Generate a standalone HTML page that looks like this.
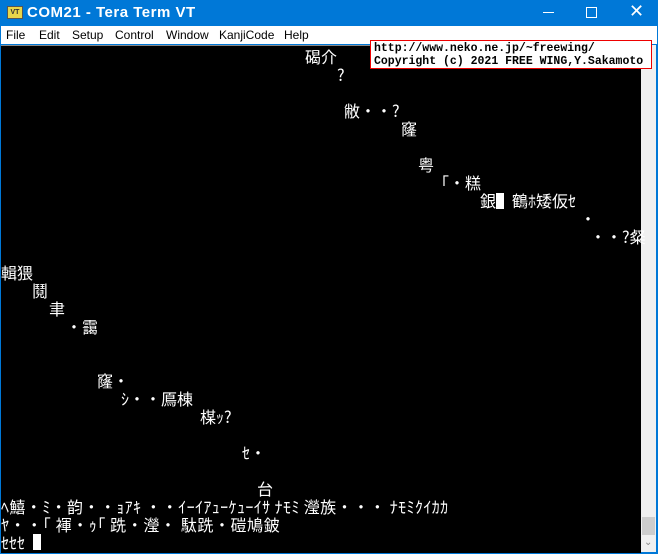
<!DOCTYPE html>
<html><head><meta charset="utf-8"><style>
body{margin:0;width:658px;height:552px;overflow:hidden;background:#0078d7;position:relative;font-family:"Liberation Sans","Noto Sans CJK JP",sans-serif}
.title{position:absolute;left:0;top:0;width:658px;height:26px;background:#0078d7;color:#fff;font-size:15px}
.title .t{position:absolute;left:27px;top:4px;font-weight:bold;letter-spacing:.5px}
.icon{position:absolute;left:7px;top:6px;width:14px;height:11px;background:#e8d64a;border:1px solid #555;font-size:7px;color:#333;line-height:11px;text-align:center;font-weight:bold}
.menu{position:absolute;left:1px;top:26px;width:656px;height:18px;background:#fff;font-size:12px;color:#000}
.menu span{position:absolute;top:2px}
.term{position:absolute;left:1px;top:45px;width:640px;height:507px;background:#000;border-top:1px solid #888}
.sb{position:absolute;left:641px;top:45px;width:15px;height:507px;background:#f0f0f0}
.r{position:absolute;color:#fff;font-size:16px;line-height:18px;white-space:pre;font-family:"Noto Sans CJK JP","WenQuanYi Zen Hei",sans-serif}
.box{position:absolute;left:370px;top:40px;width:282px;height:29px;background:#fff;border:1px solid #e00;font-family:"Liberation Mono",monospace;font-weight:bold;font-size:11.5px;line-height:13px;color:#000;padding-left:3px;padding-top:1px;box-sizing:border-box;white-space:pre}
</style></head><body>
<div class="title"><div class="icon">VT</div><div class="t">COM21 - Tera Term VT</div>
<div style="position:absolute;left:543px;top:12px;width:11px;height:1px;background:#fff"></div>
<div style="position:absolute;left:586px;top:7px;width:9px;height:9px;border:1px solid #fff"></div>
<div style="position:absolute;left:629px;top:1px;font-size:18px;font-weight:normal">✕</div></div>
<div class="menu"><span style="left:5px">File</span><span style="left:38px">Edit</span><span style="left:71px">Setup</span><span style="left:114px">Control</span><span style="left:165px">Window</span><span style="left:218px">KanjiCode</span><span style="left:283px">Help</span></div>
<div class="term"></div>
<div class="sb"><div style="position:absolute;left:1px;top:472px;width:13px;height:18px;background:#cdcdcd"></div><div style="position:absolute;left:3px;top:492px;color:#888;font-size:10px">⌄</div></div>
<div class="r" style="left:305px;top:47px">碣介</div>
<div class="r" style="left:337px;top:65px">?</div>
<div class="r" style="left:344px;top:101px">敝・・?</div>
<div class="r" style="left:401px;top:119px">窿</div>
<div class="r" style="left:418px;top:155px">粤</div>
<div class="r" style="left:433px;top:173px">「・糕</div>
<div class="r" style="left:480px;top:191px">銀▌鶴ﾎ矮仮ｾ</div>
<div class="r" style="left:580px;top:209px">・</div>
<div class="r" style="left:590px;top:227px">・・?粲</div>
<div class="r" style="left:1px;top:263px">輯猥</div>
<div class="r" style="left:32px;top:281px">鬩</div>
<div class="r" style="left:49px;top:299px">聿</div>
<div class="r" style="left:66px;top:317px">・靄</div>
<div class="r" style="left:97px;top:371px">窿・</div>
<div class="r" style="left:121px;top:389px">ｼ・・鳫棟</div>
<div class="r" style="left:200px;top:407px">楳ｯ?</div>
<div class="r" style="left:242px;top:443px">ｾ・</div>
<div class="r" style="left:257px;top:479px">台</div>
<div class="r" style="left:1px;top:497px;letter-spacing:0.4px">ﾍ鱚・ﾐ・韵・・ｮｱｷ ・・ｲｰｲｱｭｰｹｭｰｲｻ ﾅﾓﾐ 瀅族・・・ ﾅﾓﾐｸｲｶｶ</div>
<div class="r" style="left:1px;top:515px;letter-spacing:0.6px">ﾔ・・「 褌・ｩ｢ 跣・瀅・ 駄跣・磑鳩鈹</div>
<div class="r" style="left:1px;top:533px">ｾｾｾ</div>
<div style="position:absolute;left:33px;top:534px;width:8px;height:16px;background:#fff"></div>
<div class="box">http://www.neko.ne.jp/~freewing/
Copyright (c) 2021 FREE WING,Y.Sakamoto</div>
</body></html>
